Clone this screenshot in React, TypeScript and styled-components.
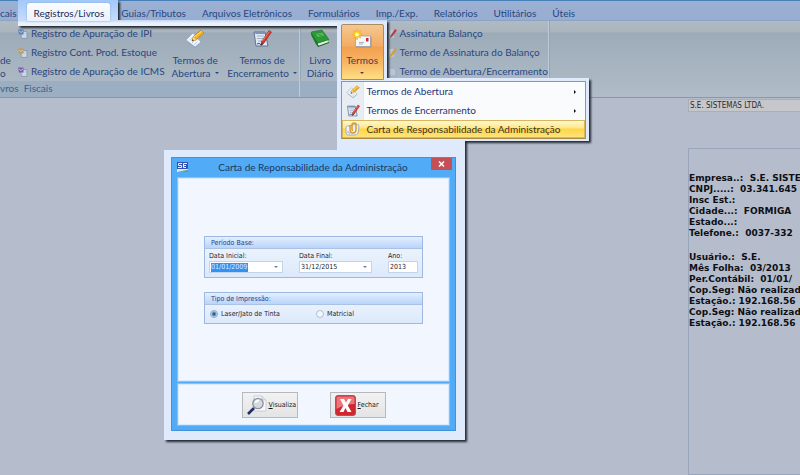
import React from 'react';
import styled, { createGlobalStyle, css } from 'styled-components';

const UI = '"Lato", "Open Sans", sans-serif';
const FORM = '"DejaVu Sans Condensed", "DejaVu Sans", sans-serif';

const Global = createGlobalStyle`
  * { box-sizing: border-box; }
  body { margin: 0; overflow: hidden; background: #b5bdcc; }
  button, input { font: inherit; color: inherit; margin: 0; padding: 0; border: 0; background: none; }
`;

const Page = styled.div`
  position: relative;
  min-height: 100vh;
  overflow: hidden;
  background: #b5bdcc;
  color: #27477f;
  font: 10px/13px ${UI};
`;

/* Menu tabs */
const TabBar = styled.nav`
  display: flex;
  height: 21px;
  padding-top: 2px;
  white-space: nowrap;
  border-top: 1px solid #4580b9;
  border-bottom: 1px solid #8ba3c5;
  background: linear-gradient(#9bb0d3, #97add1);
`;
const Tab = styled.button<{ $active?: boolean }>`
  height: 18px;
  padding: 2px 0 0;
  margin-right: 16px;
  flex: none;
  ${p => p.$active && css`
    position: relative;
    z-index: 2;
    margin: 0 11px 0 -5px;
    padding: 2px 6px 0;
    color: #1d2c5c;
    border-radius: 3px 3px 0 0;
    background: linear-gradient(#fafdff, #e9f1fc);
    box-shadow: 0 0 2px #7d9fd0;
  `}
`;

/* Ribbon */
const Ribbon = styled.div`
  display: flex;
  height: 77px;
  border-bottom: 1px solid #8199b3;
  background: linear-gradient(#b0bac2 0, #a9b5be 11px, #9dabb9 12px, #b0bdc8 76px);
`;
const Group = styled.section`
  display: flex;
  flex-direction: column;
  border-right: 1px solid #bccbd9;
  box-shadow: 1px 0 0 #93a5b8;
`;
const GroupBody = styled.div`
  display: flex;
  height: 60px;
`;
const GroupName = styled.div`
  flex: 1;
  white-space: pre;
  color: #3d5f8c;
  background: #9cafc2;
  line-height: 15px;
`;
const Cut = styled.div`
  width: 18px;
  padding-top: 33px;
`;
const List = styled.div`
  display: flex;
  flex-direction: column;
  padding-top: 3px;
`;
const ListItem = styled.button`
  display: flex;
  align-items: center;
  gap: 3px;
  height: 19px;
  white-space: nowrap;
  & svg { flex: none; }
`;
const Big = styled.button<{ $w: number }>`
  display: flex;
  flex-direction: column;
  align-items: center;
  width: ${p => p.$w}px;
  padding-top: 8px;
  line-height: 13px;
  white-space: nowrap;
  & svg { flex: none; margin-bottom: 5px; }
`;
const Caret = styled.span`
  display: inline-block;
  margin-left: 4px;
  vertical-align: 3px;
  border: 2px solid transparent;
  border-top-color: currentColor;
  border-bottom: 0;
`;
const MenuAnchor = styled.div`
  position: relative;
  z-index: 3;
  display: flex;
  margin: 3px 5px 0 0;
`;
const TermosButton = styled(Big)`
  height: 56px;
  padding-top: 4px;
  color: #4b3b55;
  border: 1px solid #ab8b62;
  border-radius: 2px 2px 0 0;
  background: linear-gradient(#f4c792 0, #f3ac63 21px, #f2a04f 22px, #f8b663 38px, #ffdf83 100%);
  & ${Caret} { margin: 5px 0 0; }
`;
const Menu = styled.div`
  position: absolute;
  top: 100%;
  left: 0;
  width: 245px;
  color: #1c3677;
  border: 1px solid #8a97a8;
  border-bottom-color: #a98c45;
  background: linear-gradient(90deg, #e7edf2 21px, #c9d1dc 21px, #fafbfd 22px);
`;
const MenuItem = styled.button<{ $active?: boolean }>`
  display: flex;
  align-items: center;
  width: 100%;
  height: ${p => (p.$active ? 18 : 19)}px;
  padding: 0 9px 0 4px;
  white-space: nowrap;
  & svg { margin-right: 7px; flex: none; }
  ${p => p.$active && css`
    color: #3b3328;
    border: 1px solid #d9b65c;
    padding-left: 2px;
    background: linear-gradient(#fff8cf 0, #ffe78a 7px, #ffd542 8px, #ffe47d 100%);
  `}
`;
const SubArrow = styled.span`
  margin-left: auto;
  border: 2px solid transparent;
  border-left-color: #111;
  border-right: 0;
`;

/* Bright silhouette behind the tab, the open menu and the window */
const Spotlight = styled.div`
  position: absolute;
  inset: 0;
  z-index: 1;
  pointer-events: none;
  filter: drop-shadow(2px 2px 1px #23272f);
`;
const Glow = styled.div<{ $x: number; $y: number; $w: number; $h: number; $bg?: string }>`
  position: absolute;
  left: ${p => p.$x}px;
  top: ${p => p.$y}px;
  width: ${p => p.$w}px;
  height: ${p => p.$h}px;
  background: ${p => p.$bg || '#dfeafc'};
`;

/* Company details at the right */
const Side = styled.aside`
  display: flex;
  flex-direction: column;
  width: 160px;
  margin: 1px -48px 0 auto;
  color: #0d0f14;
`;
const CompanyField = styled.input`
  height: 13px;
  padding-left: 1px;
  border: 1px solid #a7afbb;
  background: #c6c7ca;
  color: #2b2b2f;
  font: 8px/11px ${FORM};
`;
const Info = styled.div`
  min-height: 327px;
  margin-top: 36px;
  padding: 24px 0 0;
  border: 1px solid #98a6bd;
  font: bold 9px/11px "DejaVu Sans", sans-serif;
  white-space: pre;
`;
const InfoBlock = styled.div`
  margin-bottom: 13px;
`;

/* Window */
const Dialog = styled.div`
  position: absolute;
  z-index: 2;
  left: 171px;
  top: 157px;
  width: 285px;
  padding: 0 5px 4px;
  border: 1px solid #4391d8;
  background: #52abf7;
  color: #1d2530;
`;
const TitleBar = styled.header`
  display: flex;
  align-items: flex-start;
  height: 19px;
  & > svg { margin-top: 4px; }
`;
const Title = styled.h1`
  flex: 1;
  margin: 0;
  padding-left: 7px;
  text-align: center;
  font: 10px/19px ${UI};
  color: #17395f;
`;
const Close = styled.button`
  display: flex;
  align-items: center;
  justify-content: center;
  width: 21px;
  height: 12px;
  margin-right: -2px;
  background: #c44f54;
`;
const Panel = styled.div`
  border: 1px solid #a3b9d8;
  outline: 1px solid #d9e9fb;
  outline-offset: -2px;
  background: #f2f7ff;
`;
const Main = styled(Panel)`
  height: 205px;
  padding: 58px 26px 0;
  font: 7px/9px ${FORM};
`;
const Footer = styled(Panel)`
  display: flex;
  justify-content: center;
  gap: 32px;
  margin-top: 1px;
  padding: 8px 0 7px;
  border-bottom-color: #8fb6e0;
`;
const Fieldset = styled.fieldset`
  margin: 0 0 14px;
  padding: 0;
  border: 1px solid #9db9e2;
  background: linear-gradient(#f1f6fe, #dce9fb);
`;
const Legend = styled.div`
  height: 12px;
  padding-left: 6px;
  line-height: 12px;
  color: #24408a;
  border-bottom: 1px solid #a9c2e6;
  background: linear-gradient(#e4effe, #b9d4fb);
`;
const Fields = styled.div`
  display: flex;
  height: 28px;
  padding: 3px 0 0 4px;
  gap: 16px;
`;
const Field = styled.label<{ $w: number }>`
  display: flex;
  flex-direction: column;
  width: ${p => p.$w}px;
  white-space: nowrap;
`;
const Box = styled.span`
  display: flex;
  align-items: center;
  justify-content: space-between;
  height: 12px;
  padding: 0 4px 0 1px;
  border: 1px solid #c3d3ea;
  background: #fff;
`;
const TextInput = styled.input<{ $selected?: boolean }>`
  width: ${p => (p.$selected ? 37 : 45)}px;
  min-width: 0;
  height: 9px;
  line-height: 9px;
  ${p => p.$selected && css`
    background: #3292f2;
    color: #d9ecff;
  `}
`;
const Drop = styled.button`
  display: flex;
  color: #667ea5;
  & ${Caret} { margin: 0; }
`;
const Options = styled.div`
  display: flex;
  height: 18px;
  padding-left: 5px;
`;
const Option = styled.label`
  display: flex;
  align-items: center;
  width: 106px;
  gap: 3px;
`;
const Radio = styled.input.attrs({ type: 'radio' })`
  appearance: none;
  width: 8px;
  height: 8px;
  border: 1px solid #b3bfd0;
  border-radius: 50%;
  background: #f3f6fa;
  &:checked { border-color: #8ba7cc; background: radial-gradient(#2c5f98 0 1px, #cfe2f6 3px); }
`;
const Action = styled.button`
  display: flex;
  align-items: center;
  justify-content: flex-start;
  gap: 2px;
  width: 56px;
  height: 26px;
  padding-left: 4px;
  border: 1px solid #b5b8bd;
  background: linear-gradient(#f2f2f2, #e4e4e4);
  color: #15171c;
  font: 7px/9px ${FORM};
  & svg { flex: none; }
`;

type S = { s: number };
const NotePencil = ({ s }: S) => (
  <svg width={s} height={s} viewBox="0 0 20 20">
    <path d="M2 13 9 6l7 8-6 5z" fill="#7f93b2" opacity=".5" />
    <path d="M1 11 8 4l8 9-6 5z" fill="#edf3fb" stroke="#9aaccb" strokeWidth=".8" />
    <path d="m5 11 3-3m-1 6 2-2m0 4 3-3" stroke="#b5c3da" strokeWidth=".8" />
    <path d="m8 8 8-7 3 3-8 7-4 1z" fill="#f0b21e" stroke="#b77b17" strokeWidth=".7" />
    <path d="m9 8 8-6" stroke="#ffe27a" />
    <path d="m7 12 1-4 3 3z" fill="#f5dfb8" />
    <path d="m7 12 .6-2 1.400 1.400z" fill="#333" />
  </svg>
);
const NotePen = ({ s }: S) => (
  <svg width={s} height={s} viewBox="0 0 20 20">
    <path d="M2 3h11l3 14H4z" fill="#dfe8f5" stroke="#5e7391" />
    <path d="M3 3h10l.4 2H3.400z" fill="#7d93b5" />
    <path d="M5 7h7M5 9.500h6M6 12h4" stroke="#93a5c1" strokeWidth=".8" />
    <path d="M17 1.500 19.500 3 12 14l-3 2.500.5-4z" fill="#d23a2c" stroke="#9a2119" strokeWidth=".6" />
    <path d="m17.500 2.500-7 9.500" stroke="#f3917e" strokeWidth=".8" />
    <path d="m9 16.500.5-3 2 1.500z" fill="#343a49" />
    <path d="M5 15q2-2 4 1" stroke="#35517f" fill="none" />
  </svg>
);
const Book = () => (
  <svg width="20" height="20" viewBox="0 0 20 20">
    <path d="M1 4 6 15l2 3 11-4v-3L8 14z" fill="#14601f" />
    <path d="m7.500 14.500 11-3.500.3 2-10.300 3.800z" fill="#e4ecdf" />
    <path d="M1 4q0-1 1-1.300L12 1l7 9.500L7.500 14z" fill="#2b9a35" stroke="#17702a" strokeWidth=".6" />
    <path d="M2 4.500 7.700 14l.8 3.500L6 15 1 6z" fill="#1b7c28" />
    <path d="m6 5 6-1.200 2 2.700-6 1.500z" fill="#6cc46c" />
    <path d="m7.500 5.700 4-.8M8.500 7l4-.9" stroke="#1c7a2a" strokeWidth=".6" />
  </svg>
);
const Envelope = () => (
  <svg width="20" height="20" viewBox="0 0 20 20">
    <path d="M4 8h15.500v10.500H4z" fill="#a28d83" />
    <path d="M3.500 7h15v10.500h-15z" fill="#f6f6f9" stroke="#9298a4" strokeWidth=".7" />
    <path d="M14 9h2.500v3.500H14z" fill="#cc2c2c" />
    <path d="M7 13.500h5M7 15h4" stroke="#9aa3b3" strokeWidth=".8" />
    <path d="m5 0 1 3 2.500-1.500-1 3 3 1-3 1 1.200 2.500L6 8 5 11 4 8 1.500 9.200l1-2.700-2.500-1 2.500-1-1-3L4 3z" fill="#ffd42c" stroke="#f0a91e" strokeWidth=".6" />
    <circle cx="5" cy="5.500" r="1.800" fill="#fff8b8" />
  </svg>
);
const Scroll = () => (
  <svg width="15" height="14" viewBox="0 0 15 14">
    <path d="M1 5q1-2 3-1l8-2q2 0 2 3l-1 6q-1 2-3 2H3q-2 0-2-3z" fill="#eef1f5" stroke="#97a3b4" strokeWidth=".8" />
    <path d="M5 3v4q0 4 3 4t3-4V3q0-2-2-2T7 3v4q0 1.500 1 1.500" fill="none" stroke="#d99a25" strokeWidth="1.500" />
    <path d="M2 10q2-1 3 2" stroke="#a1acba" fill="none" />
  </svg>
);
const Sheet = ({ tint }: { tint: string }) => (
  <svg width="10" height="10" viewBox="0 0 10 10">
    <path d="M2.500 2.500h6.500v7H3.500z" fill="#c6d1e0" stroke="#7f8fa9" strokeWidth=".7" />
    <path d="M0 .5h5.500v5H1z" fill={tint} />
    <path d="m1 2 2 1.500L5 2M4.500 7h3.500" stroke="#dbe4f0" strokeWidth=".7" fill="none" />
  </svg>
);
const MiniPen = ({ tint }: { tint: string }) => (
  <svg width="8" height="10" viewBox="0 0 8 10">
    <path d="M0 1h5v8H0z" fill="#b9c6d8" />
    <path d="M6 0 8 1.500 3 8 1 9l.5-2.500z" fill={tint} />
  </svg>
);
const MiniSheet = () => (
  <svg width="8" height="10" viewBox="0 0 8 10">
    <path d="M0 1h5l2 2v6H0z" fill="#b9c4d3" stroke="#8fa0b6" strokeWidth=".6" />
  </svg>
);
const AppMark = () => (
  <svg width="11" height="10" viewBox="0 0 11 10">
    <path d="M0 0h11v7H0z" fill="#3450b4" />
    <path d="M5 1.500H1.500v2h3v2H1M10 1.500H6.500v4H9M6.500 3.500H9" stroke="#eef4ff" fill="none" />
    <path d="M0 7h11v1.500L0 10z" fill="#d8efe4" />
    <path d="m1 9.500 10-1.500v1.500z" fill="#3ea56b" />
  </svg>
);
const Magnifier = () => (
  <svg width="20" height="20" viewBox="0 0 20 20">
    <path d="M7 1h8l4 4v11H7z" fill="#f8f9fb" stroke="#c2c5cc" strokeWidth=".8" />
    <path d="M15 1v4h4" fill="#dfe2e8" stroke="#c2c5cc" strokeWidth=".8" />
    <path d="m7 13-6 6" stroke="#1d2f66" strokeWidth="2.600" />
    <circle cx="11" cy="8.500" r="5.200" fill="#d4d9e0" stroke="#8c929e" strokeWidth="1.300" />
    <path d="M7.500 8q1-3.500 5-3.300-1 3-5 3.300z" fill="#fff" />
  </svg>
);
const RedX = () => (
  <svg width="21" height="21" viewBox="0 0 21 21">
    <rect x=".5" y=".5" width="20" height="20" rx="2.500" fill="#cf2630" stroke="#a9545a" />
    <path d="M1.500 3q0-1.500 1.500-1.500h15q1.500 0 1.500 1.500v6q-9 0-18 5z" fill="#e8767b" />
    <path d="M5 4h4l2 3.800L13 4h3.500l-3.700 6.500L16.500 17h-4L10.500 13l-2 4h-4l4-6.500z" fill="#fff" />
  </svg>
);

const TABS = ['Guias/Tributos', 'Arquivos Eletrônicos', 'Formulários', 'Imp./Exp.', 'Relatórios', 'Utilitários', 'Úteis'];
const COMPANY = ['Empresa..:  S.E. SISTE', 'CNPJ.....:  03.341.645', 'Insc Est.:', 'Cidade...:  FORMIGA', 'Estado...:', 'Telefone.:  0037-332'];
const SESSION = ['Usuário.:  S.E.', 'Mês Folha:  03/2013', 'Per.Contábil:  01/01/', 'Cop.Seg: Não realizad', 'Estação.: 192.168.56', 'Cop.Seg: Não realizad', 'Estação.: 192.168.56'];

export default function App() {
  return (
    <Page>
      <Global />
      <TabBar>
        <Tab>cais</Tab>
        <Tab $active>Registros/Livros</Tab>
        {TABS.map(t => <Tab key={t}>{t}</Tab>)}
      </TabBar>
      <Ribbon>
        <Group>
          <GroupBody>
            <Cut>de<br />o</Cut>
            <List>
              <ListItem><Sheet tint="#5c83b5" />Registro de Apuração de IPI</ListItem>
              <ListItem><Sheet tint="#c29a4e" />Registro Cont. Prod. Estoque</ListItem>
              <ListItem><Sheet tint="#7d5cae" />Registro de Apuração de ICMS</ListItem>
            </List>
            <Big $w={61}><NotePencil s={20} /><span>Termos de</span><span>Abertura<Caret /></span></Big>
            <Big $w={73}><NotePen s={20} /><span>Termos de</span><span>Encerramento<Caret /></span></Big>
          </GroupBody>
          <GroupName>vros  Fiscais</GroupName>
        </Group>
        <Group>
          <GroupBody>
            <Big $w={41}><Book /><span>Livro</span><span>Diário</span></Big>
            <MenuAnchor>
              <TermosButton $w={43} aria-haspopup="menu" aria-expanded="true">
                <Envelope /><span>Termos</span><Caret />
              </TermosButton>
              <Menu role="menu">
                <MenuItem role="menuitem"><NotePencil s={14} />Termos de Abertura<SubArrow /></MenuItem>
                <MenuItem role="menuitem"><NotePen s={14} />Termos de Encerramento<SubArrow /></MenuItem>
                <MenuItem role="menuitem" $active><Scroll />Carta de Responsabilidade da Administração</MenuItem>
              </Menu>
            </MenuAnchor>
            <List>
              <ListItem><MiniPen tint="#b5424a" />Assinatura Balanço</ListItem>
              <ListItem><MiniPen tint="#d0a032" />Termo de Assinatura do Balanço</ListItem>
              <ListItem><MiniSheet />Termo de Abertura/Encerramento</ListItem>
            </List>
          </GroupBody>
          <GroupName />
        </Group>
      </Ribbon>
      <Side>
        <CompanyField aria-label="Empresa" defaultValue="S.E. SISTEMAS LTDA." />
        <Info>
          <InfoBlock>{COMPANY.map(l => <div key={l}>{l}</div>)}</InfoBlock>
          <InfoBlock>{SESSION.map((l, i) => <div key={i}>{l}</div>)}</InfoBlock>
        </Info>
      </Side>

      <Spotlight>
        <Glow $x={18} $y={0} $w={100} $h={21} $bg="linear-gradient(#a2c8fa, #c6dcfb)" />
        <Glow $x={18} $y={20} $w={369} $h={6} $bg="linear-gradient(#c2d5f3, #e9f1fc 3px)" />
        <Glow $x={337} $y={22} $w={50} $h={60} />
        <Glow $x={337} $y={78} $w={252} $h={63} />
        <Glow $x={337} $y={140} $w={128} $h={12} />
        <Glow $x={164} $y={150} $w={301} $h={290} />
      </Spotlight>

      <Dialog role="dialog" aria-labelledby="dialog-title">
        <TitleBar>
          <AppMark />
          <Title id="dialog-title">Carta de Reponsabilidade da Administração</Title>
          <Close aria-label="Fechar janela">
            <svg width="7" height="6" viewBox="0 0 7 6"><path d="m1 .5 5 5m0-5-5 5" stroke="#fff" strokeWidth="1.500" /></svg>
          </Close>
        </TitleBar>
        <Main>
          <Fieldset aria-label="Período Base">
            <Legend>Período Base:</Legend>
            <Fields>
              <Field $w={74}>Data Inicial:
                <Box><TextInput $selected defaultValue="01/01/2009" /><Drop aria-label="Abrir calendário"><Caret /></Drop></Box>
              </Field>
              <Field $w={73}>Data Final:
                <Box><TextInput defaultValue="31/12/2015" /><Drop aria-label="Abrir calendário"><Caret /></Drop></Box>
              </Field>
              <Field $w={30}>Ano:
                <Box><TextInput defaultValue="2013" /></Box>
              </Field>
            </Fields>
          </Fieldset>
          <Fieldset aria-label="Tipo de Impressão">
            <Legend>Tipo de Impressão:</Legend>
            <Options>
              <Option><Radio name="printer" defaultChecked />Laser/Jato de Tinta</Option>
              <Option><Radio name="printer" />Matricial</Option>
            </Options>
          </Fieldset>
        </Main>
        <Footer>
          <Action><Magnifier /><span><u>V</u>isualiza</span></Action>
          <Action><RedX /><span><u>F</u>echar</span></Action>
        </Footer>
      </Dialog>
    </Page>
  );
}
